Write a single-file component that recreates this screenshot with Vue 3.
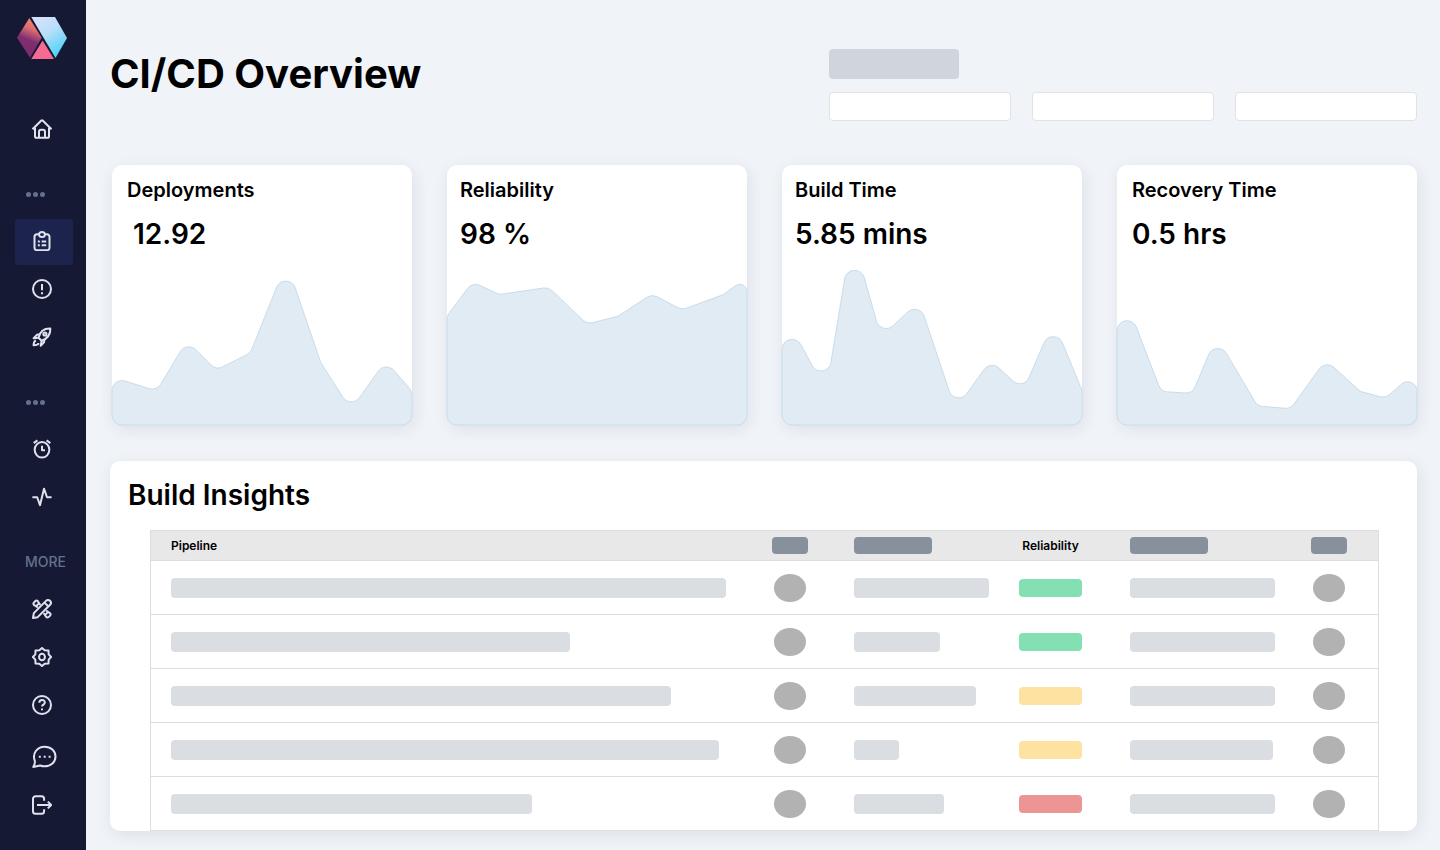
<script setup>
const metrics = [
  {
    label: 'Deployments', value: '12.92', wide: true, inset: true,
    points: [[0, 212], [44.7, 226], [74.8, 175.7], [104.2, 205.1], [138.3, 188], [174.5, 97.4], [208.6, 197.2], [238.8, 244.7], [273.7, 195.9], [300, 226.2]],
  },
  {
    label: 'Reliability', value: '98 %',
    points: [[0, 151.2], [25.4, 116.9], [52.4, 129.5], [101.5, 122.3], [140.1, 159.1], [171, 151.2], [204.9, 129.1], [235, 144.8], [276.7, 129.5], [300, 112]],
  },
  {
    label: 'Build Time', value: '5.85 mins',
    points: [[0, 145], [44.2, 226.2], [70, 69.4], [99, 172], [137.2, 136.4], [173.4, 244.5], [208.7, 195.2], [241.3, 225.8], [271.5, 156], [300, 225.5]],
  },
  {
    label: 'Recovery Time', value: '0.5 hrs', wide: true,
    points: [[0, 111.8], [44.1, 226.5], [75.4, 228.4], [99.3, 171.3], [140.5, 241], [173.5, 243.8], [208.8, 194.8], [243.2, 226.4], [268.6, 233.2], [300, 205.2]],
  },
]

// Closed area outline whose corners are rounded with a constant radius.
function areaPath(points, radius = 10) {
  const pts = [...points, [300, 260], [0, 260]]
  const n = pts.length
  const parts = []
  for (let i = 0; i < n; i++) {
    const p = pts[i]
    const a = pts[(i + n - 1) % n]
    const b = pts[(i + 1) % n]
    const la = Math.hypot(a[0] - p[0], a[1] - p[1])
    const lb = Math.hypot(b[0] - p[0], b[1] - p[1])
    const ua = [(a[0] - p[0]) / la, (a[1] - p[1]) / la]
    const ub = [(b[0] - p[0]) / lb, (b[1] - p[1]) / lb]
    const half = Math.acos(ua[0] * ub[0] + ua[1] * ub[1]) / 2
    const t = Math.min(radius / Math.tan(half), la / 2, lb / 2)
    const r = t * Math.tan(half)
    const sweep = ua[0] * ub[1] - ua[1] * ub[0] < 0 ? 1 : 0
    const s = [p[0] + ua[0] * t, p[1] + ua[1] * t].map((v) => v.toFixed(2))
    const e = [p[0] + ub[0] * t, p[1] + ub[1] * t].map((v) => v.toFixed(2))
    parts.push(`${i ? 'L' : 'M'}${s} A${r.toFixed(2)} ${r.toFixed(2)} 0 0 ${sweep} ${e}`)
  }
  return parts.join(' ') + ' Z'
}

const rows = [
  { name: 555, detail: 135, status: 'good', extra: 145 },
  { name: 399, detail: 86, status: 'good', extra: 145 },
  { name: 500, detail: 122, status: 'warn', extra: 145 },
  { name: 548, detail: 45, status: 'warn', extra: 143 },
  { name: 361, detail: 90, status: 'bad', extra: 145 },
]
const filters = ['Filter one', 'Filter two', 'Filter three']
</script>

<template>
  <div class="app">
    <aside class="sidebar">
      <a class="logo" href="#" aria-label="Dashboard home">
        <svg width="50" height="42" viewBox="0 0 50 42">
          <defs>
            <linearGradient id="lgA" x1="0.6" y1="0" x2="0.35" y2="1">
              <stop offset="0" stop-color="#f77f6c" /><stop offset="0.25" stop-color="#e07070" />
              <stop offset="0.55" stop-color="#7f2f70" /><stop offset="1" stop-color="#7b2a6c" />
            </linearGradient>
            <linearGradient id="lgB" x1="0.2" y1="0" x2="0.8" y2="1">
              <stop offset="0.1" stop-color="#cfe0fb" /><stop offset="0.4" stop-color="#b9def9" />
              <stop offset="1" stop-color="#3fd0f8" />
            </linearGradient>
          </defs>
          <path d="M12.3 1 L24.7 20.8 L13 40.8 L0 20.8 Z" fill="url(#lgA)" />
          <path d="M14.3 0 H38 L50 21 L38.5 41 Z" fill="url(#lgB)" />
          <path d="M25.6 23.5 L37 42 H14.3 Z" fill="#f76a92" />
        </svg>
      </a>

      <nav class="nav" aria-label="Main">
        <a class="item" href="#" aria-label="Home">
          <svg class="icon" viewBox="0 0 24 24"><path d="M.6 12.300 11.200 1.800a1.200 1.200 0 0 1 1.600 0l10.600 10.500M3.600 10.500v10.100a2 2 0 0 0 2 2h12.800a2 2 0 0 0 2-2V10.500M8.400 22v-6.600a2.500 2.500 0 0 1 2.500-2.500h2.200a2.500 2.500 0 0 1 2.500 2.500V22" /></svg>
        </a>
        <div class="group dots"><i></i><i></i><i></i></div>
        <a class="item active" href="#" aria-label="Overview" aria-current="page">
          <svg class="icon" viewBox="0 0 24 24"><path d="M8.600 4H6a3 3 0 0 0-3 3v13a3 3 0 0 0 3 3h12a3 3 0 0 0 3-3V7a3 3 0 0 0-3-3h-2.600" /><path d="M12 1.200c2 0 3.500 1.200 3.500 3S14 7.200 12 7.200 8.500 6 8.500 4.200 10 1.200 12 1.200Z" /><path d="M7 12.500h2.400M11.600 12.500H17M7 17.200h2.400M11.600 17.200H17" /></svg>
        </a>
        <a class="item" href="#" aria-label="Alerts">
          <svg class="icon" viewBox="0 0 24 24"><circle cx="12" cy="12" r="10.800" /><path d="M12 6v7.500M12 16v2.400" /></svg>
        </a>
        <a class="item" href="#" aria-label="Releases">
          <svg class="icon" viewBox="0 0 24 24"><path d="M7.800 12.800C9.500 5.500 14.500 1.600 22 1.800c.3 7.300-3.300 12-10.400 14.700Z" /><path d="M9.800 8.600 5.800 9.400 2 13.400l5.800-.6M15 14.200l-.6 4.300-4 4 1.200-6M4.600 16c-2 .9-2.600 3-2.700 6 3 0 5.300-.6 6.300-2.600" /><circle cx="15.500" cy="8.400" r="1.900" /></svg>
        </a>
        <div class="group dots"><i></i><i></i><i></i></div>
        <a class="item" href="#" aria-label="Schedules">
          <svg class="icon" viewBox="0 0 24 24"><ellipse cx="12" cy="13" rx="8.800" ry="9.300" /><path d="M12 8.200V13.500h3.600M2 5 6.500 1.600M22 5 17.500 1.600" /></svg>
        </a>
        <a class="item" href="#" aria-label="Activity">
          <svg class="icon" viewBox="0 0 24 24"><path d="M.5 12.300h5.700l3.400 9.500L14.400 2l3.600 10.300h5.500" /></svg>
        </a>
        <div class="group more">MORE</div>
        <a class="item" href="#" aria-label="Tools">
          <svg class="icon" viewBox="0 0 24 24"><path d="M16.800 2.300a3.200 3.200 0 0 1 4.900 4.600L6.800 21.800l-5.600 1 1-5.900Z" /><path d="M15 4.300 19.700 9" /><path d="M10 7.200 6.800 2.400C5 .6.400 5 2.200 7l4.900 3.100M5.800 7.800 8.300 5.300M17 14l4.800 3.200c1.900 1.900-2.600 6.400-4.500 4.500l-3.300-4.800M16 18.800l2.500-2.500" /></svg>
        </a>
        <a class="item" href="#" aria-label="Settings">
          <svg class="icon" viewBox="0 0 24 24"><path d="M12 1.200 15.200 4l4.600.2.200 4.600 2.900 3.200-2.900 3.200-.2 4.600-4.600.2-3.200 2.800L8.800 20l-4.600-.2-.2-4.600L1.100 12 4 8.800l.2-4.600L8.800 4Z" /><ellipse cx="12" cy="12" rx="3.500" ry="4" /></svg>
        </a>
        <a class="item" href="#" aria-label="Help">
          <svg class="icon" viewBox="0 0 24 24"><circle cx="12" cy="12" r="10.800" /><path d="M8.800 9.200c0-4.400 6.600-4.200 6.600-.3 0 2.600-3.400 2.700-3.400 5M12 16.200v2.200" /></svg>
        </a>
        <a class="item chat" href="#" aria-label="Messages">
          <svg class="icon large" viewBox="0 0 24 24"><path d="M2.300 15.800C-.6 8.500 4.700 1.700 12 1.700c6.500 0 11 4.300 11 9.800s-4.500 9.800-11 9.800c-1.600 0-3-.3-4.300-.8L.8 22c1-1.800 2-3.600 1.500-6.200Z" /><path d="M6.300 11.700h2M11.200 11.700h2M16.100 11.700h2" /></svg>
        </a>
        <a class="item" href="#" aria-label="Sign out">
          <svg class="icon" viewBox="0 0 24 24"><path d="M14.500 7V4.500a3 3 0 0 0-3-3H4.200a3 3 0 0 0-3 3v15a3 3 0 0 0 3 3h7.300a3 3 0 0 0 3-3V17M6 12h16.500M19 8l4 4-4 4" /></svg>
        </a>
      </nav>
    </aside>

    <main class="main">
      <header class="header">
        <h1>CI/CD Overview</h1>
        <div class="tools">
          <div class="tools-label"></div>
          <div class="filters">
            <input v-for="f in filters" :key="f" type="text" :aria-label="f" />
          </div>
        </div>
      </header>

      <section class="cards" aria-label="Key metrics">
        <article v-for="m in metrics" :key="m.label" class="card" :class="{ wide: m.wide }">
          <svg class="chart" viewBox="0 0 300 260" preserveAspectRatio="none" aria-hidden="true">
            <path :d="areaPath(m.points)" />
          </svg>
          <h2>{{ m.label }}</h2>
          <p class="value" :class="{ inset: m.inset }">{{ m.value }}</p>
        </article>
      </section>

      <section class="panel">
        <h2>Build Insights</h2>
        <table>
          <colgroup>
            <col /><col class="c-mark" /><col class="c-detail" /><col class="c-status" /><col class="c-extra" /><col class="c-end" />
          </colgroup>
          <thead>
            <tr>
              <th scope="col">Pipeline</th>
              <th class="mid"><span class="tag small"></span></th>
              <th><span class="tag"></span></th>
              <th class="mid" scope="col">Reliability</th>
              <th><span class="tag"></span></th>
              <th class="mid"><span class="tag small"></span></th>
            </tr>
          </thead>
          <tbody>
            <tr v-for="(r, i) in rows" :key="i">
              <td><span class="bar" :style="{ width: r.name + 'px' }"></span></td>
              <td class="mid"><span class="disc"></span></td>
              <td><span class="bar" :style="{ width: r.detail + 'px' }"></span></td>
              <td class="mid"><span class="status" :class="r.status"></span></td>
              <td><span class="bar" :style="{ width: r.extra + 'px' }"></span></td>
              <td class="mid"><span class="disc"></span></td>
            </tr>
          </tbody>
        </table>
      </section>
    </main>
  </div>
</template>

<style>
body { background: #f0f3f8; }
</style>

<style scoped>
* { box-sizing: border-box; }
.app {
  display: flex;
  min-height: 100vh;
  background: #f0f3f8;
  color: #000;
  font-family: Inter, "Liberation Sans", sans-serif;
}
h1, h2, p { margin: 0; }

.sidebar {
  flex: none;
  width: 86px;
  background: #151933;
}
.logo { display: block; width: 50px; margin: 17px 0 0 17px; }
.logo svg { display: block; }
.nav {
  display: flex;
  flex-direction: column;
  gap: 2px;
  margin: 48px 13px 0 15px;
}
.item {
  display: flex;
  align-items: center;
  height: 46px;
  padding: 0 0 2px 17px;
  border-radius: 2px;
}
.item.active { background: #1c244d; }
.item.chat { margin-top: 4px; }
.icon {
  flex: none;
  width: 20px;
  height: 20px;
  fill: none;
  stroke: #dde2ee;
  stroke-width: 2.4;
  stroke-linejoin: round;
}
.icon.large { width: 25px; height: 24px; stroke-width: 2; }
.group {
  display: flex;
  align-items: center;
  height: 16px;
  margin: 31px 0 15px 10px;
  color: #64718c;
  font-size: 14px;
  font-weight: 500;
  line-height: 16px;
}
.dots { gap: 2px; padding-left: 1px; }
.dots i { width: 5px; height: 5px; border-radius: 50%; background: #64718c; }

.main { flex: 1; min-width: 0; padding: 0 23px 19px 24px; }
.header {
  display: flex;
  justify-content: space-between;
  gap: 24px;
  height: 165px;
  padding-top: 49px;
}
h1 { font-size: 40px; font-weight: 700; line-height: 49px; white-space: nowrap; }
.tools { flex: 0 1 588px; min-width: 0; }
.tools-label { width: 130px; height: 30px; border-radius: 4px; background: #ced5dd; }
.filters { display: flex; gap: 21px; margin-top: 13px; }
.filters input {
  flex: 1;
  min-width: 0;
  height: 29px;
  padding: 0 8px;
  border: 1px solid #e1e2e5;
  border-radius: 4px;
  background: #fff;
  font: 14px Inter, sans-serif;
}

.cards {
  display: grid;
  grid-template-columns: repeat(4, 1fr);
  gap: 35px;
  padding-left: 2px;
}
.card {
  position: relative;
  height: 260px;
  padding: 13px;
  border-radius: 10px;
  background: #fff;
  box-shadow: 2px 4px 16px rgba(30, 40, 70, 0.09);
}
.card.wide { padding-left: 15px; }
.chart { position: absolute; inset: 0; width: 100%; height: 100%; overflow: visible; }
.chart path { fill: #e1ebf4; stroke: #c9dcea; stroke-width: 1; }
.card h2, .value { position: relative; }
.card h2 { font-size: 20px; font-weight: 600; line-height: 24px; }
.value { margin-top: 15px; font-size: 28px; font-weight: 600; line-height: 34px; }
.value.inset { padding-left: 6px; }

.panel {
  margin-top: 36px;
  padding: 17px 38px 0 40px;
  border-radius: 10px;
  background: #fff;
  box-shadow: 2px 4px 16px rgba(30, 40, 70, 0.09);
  overflow: hidden;
}
.panel h2 { margin-left: -22px; font-size: 28px; font-weight: 600; line-height: 34px; }
table {
  width: 100%;
  margin-top: 18px;
  border: 1px solid #dcdddf;
  border-bottom: 0;
  border-spacing: 0;
  table-layout: fixed;
}
.c-mark { width: 80px; }
.c-detail { width: 165px; }
.c-status { width: 111px; }
.c-extra { width: 174px; }
.c-end { width: 98px; }
th, td { padding: 0 0 0 24px; border-bottom: 1px solid #dcdddf; text-align: left; vertical-align: middle; }
th:first-child, td:first-child { padding-left: 20px; }
th { height: 30px; background: #e8e8e8; font-size: 12px; font-weight: 600; line-height: 16px; }
td { height: 54px; }
.mid, th.mid { padding: 0; text-align: center; }
.tag, .bar, .disc, .status { display: block; max-width: 100%; }
.tag { width: 78px; height: 17px; border-radius: 4px; background: #87909d; }
.tag.small { width: 36px; }
.bar { height: 20px; border-radius: 4px; background: #dadde2; }
.disc { width: 32px; height: 28px; border-radius: 50%; background: #b2b2b2; }
.status { width: 63px; height: 18px; border-radius: 4px; }
.mid > span { margin: 0 auto; }
.good { background: #84e0b3; }
.warn { background: #fde2a1; }
.bad { background: #ed9494; }
</style>
